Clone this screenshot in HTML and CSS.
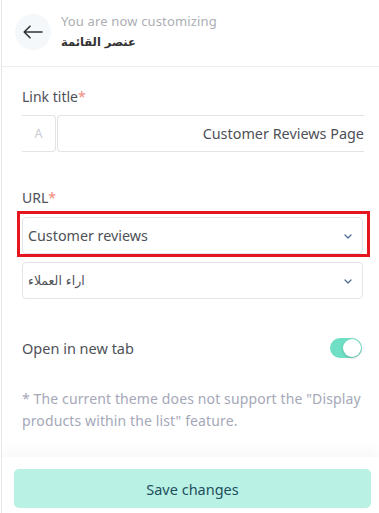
FILE: index.html
```html
<!DOCTYPE html>
<html lang="en">
<head>
<meta charset="utf-8">
<link rel="stylesheet" href="styles.css">
</head>
<body>
<div class="panel">
  <header class="header">
    <button class="back" aria-label="Back">
      <svg width="20" height="14" viewBox="0 0 20 14" fill="none" stroke="#2f3338" stroke-width="1.6" stroke-linecap="round" stroke-linejoin="round"><path d="M19 7H1.5M7 1.2L1.2 7 7 12.8"/></svg>
    </button>
    <div class="titles">
      <div class="sub">You are now customizing</div>
      <div class="title" dir="rtl">عنصر القائمة</div>
    </div>
  </header>

  <main class="content">
    <div class="field">
      <label class="label">Link title<span class="req">*</span></label>
      <div class="group">
        <div class="prefix">A</div>
        <div class="input">Customer Reviews Page</div>
      </div>
    </div>

    <div class="field url">
      <label class="label">URL<span class="req">*</span></label>
      <div class="highlight">
        <div class="select">
          <span>Customer reviews</span>
          <svg class="chev" width="8" height="5" viewBox="0 0 8 5" fill="none" stroke="#4f6f92" stroke-width="1.3" stroke-linecap="round" stroke-linejoin="round"><path d="M1 1l3 3 3-3"/></svg>
        </div>
      </div>
      <div class="select second">
        <span class="ar">اراء العملاء</span>
        <svg class="chev" width="8" height="5" viewBox="0 0 8 5" fill="none" stroke="#4f6f92" stroke-width="1.3" stroke-linecap="round" stroke-linejoin="round"><path d="M1 1l3 3 3-3"/></svg>
      </div>
    </div>

    <div class="toggle-row">
      <span>Open in new tab</span>
      <span class="toggle"><span class="knob"></span></span>
    </div>

    <p class="note">* The current theme does not support the "Display products within the list" feature.</p>
  </main>

  <footer class="footer">
    <button class="save">Save changes</button>
  </footer>
</div>
</body>
</html>
```

FILE: styles.css
```css
* { box-sizing: border-box; }
html, body { margin: 0; padding: 0; background: #fff; }
body {
  font-family: "Noto Sans", "DejaVu Sans", sans-serif;
  color: #444;
}
.panel {
  margin-left: 1px;
  border-left: 1px solid #e6e7ea;
  height: 513px;
  display: flex;
  flex-direction: column;
  overflow: hidden;
}
.header {
  height: 67px;
  flex: none;
  display: flex;
  align-items: center;
  gap: 10px;
  padding-left: 13px;
  padding-bottom: 3px;
  border-bottom: 1px solid #eceef1;
}
.back {
  width: 36px;
  height: 36px;
  border-radius: 50%;
  border: 0;
  background: #f5f8fb;
  display: flex;
  align-items: center;
  justify-content: center;
  padding: 0;
  margin-top: 1px;
}
.titles { display: flex; flex-direction: column; gap: 2px; }
.sub { font-size: 13px; letter-spacing: 0.15px; color: #acaeb3; line-height: 18px; }
.title {
  font-family: "DejaVu Sans", sans-serif;
  font-weight: bold;
  font-size: 11.5px;
  color: #333;
  line-height: 20px;
  text-align: right;
  align-self: flex-start;
}
.content {
  flex: 1;
  padding: 20px 16px 0 20px;
}
.field { display: flex; flex-direction: column; }
.label {
  font-size: 14px;
  color: #4e5157;
  line-height: 20px;
  margin-bottom: 8px;
}
.req { color: #f08a7a; }
.group {
  display: flex;
  height: 37px;
  margin-right: -1px;
}
.prefix {
  width: 34px;
  flex: none;
  border: 1px solid #e2e3e6;
  border-left: 0;
  border-radius: 0 4px 4px 0;
  display: flex;
  align-items: center;
  justify-content: center;
  color: #c9ccd1;
  font-size: 12.5px;
}
.input {
  flex: 1;
  margin-left: 1px;
  border: 1px solid #e2e3e6;
  border-right: 0;
  border-radius: 4px 0 0 4px;
  display: flex;
  align-items: center;
  justify-content: flex-end;
  font-size: 14.4px;
  color: #4e5157;
}
.url { margin-top: 36px; }
.url .label { margin-bottom: 3px; }
.highlight {
  border: 3px solid #e5161f;
  padding: 3px 4px 0 2px;
  margin: 0 -7px 0 -5px;
}
.select {
  height: 37px;
  border: 1px solid #e3e4e7;
  border-radius: 4px;
  display: flex;
  align-items: center;
  justify-content: space-between;
  padding: 0 10px 0 5px;
  font-size: 14.3px;
  color: #4e5157;
}
.second { margin-top: 5px; }
.ar {
  font-family: "DejaVu Sans", sans-serif;
  font-size: 12.5px;
  direction: rtl;
}
.chev { flex: none; margin-top: 1px; }
.toggle-row {
  margin-top: 39px;
  display: flex;
  align-items: center;
  justify-content: space-between;
  font-size: 14.5px;
  color: #4e5157;
  padding-right: 1px;
}
.toggle {
  width: 32px;
  height: 20px;
  border-radius: 10px;
  background: #6fe0c5;
  position: relative;
  display: flex;
  align-items: center;
  justify-content: flex-end;
  padding: 0 1px;
}
.knob {
  width: 18px;
  height: 18px;
  border-radius: 50%;
  background: #fff;
  box-shadow: 0 1px 3px rgba(0,0,0,0.2);
}
.note {
  margin: 30px 0 0;
  font-size: 14px;
  letter-spacing: 0.12px;
  line-height: 22px;
  color: #a5a8b8;
}
.footer {
  flex: none;
  padding: 12px 8px 5px 12px;
  box-shadow: 0 -6px 14px rgba(0,0,0,0.035);
  background: #fff;
}
.save {
  width: 100%;
  height: 39px;
  border: 0;
  border-radius: 5px;
  background: #b9f1e4;
  color: #1f4f5c;
  font-family: "Noto Sans", sans-serif;
  font-size: 14.5px;
}
```
